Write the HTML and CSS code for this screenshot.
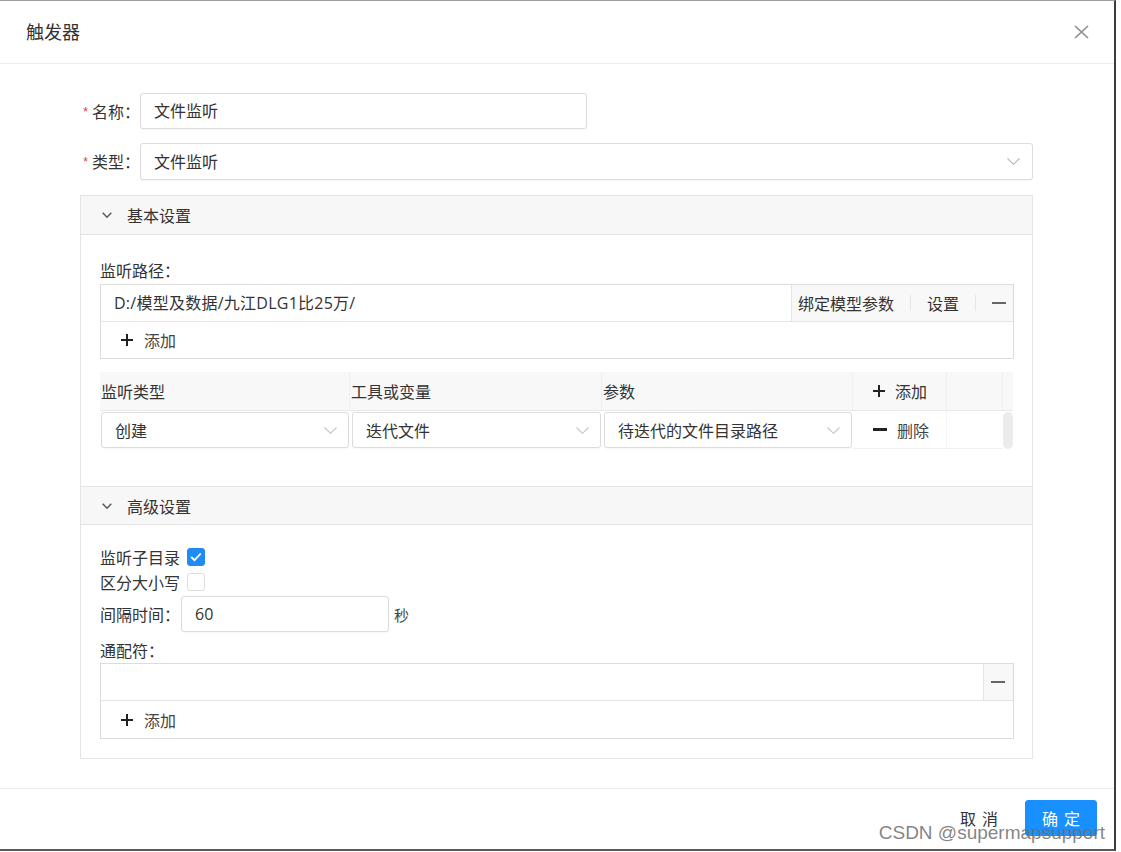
FILE: index.html
```html
<!DOCTYPE html>
<html lang="zh-CN">
<head>
<meta charset="utf-8">
<title>触发器</title>
<link rel="stylesheet" href="styles.css">
</head>
<body>
<div class="dialog">
  <div class="dlg-head">
    <span class="dlg-title">触发器</span>
    <svg class="close" width="15" height="14" viewBox="0 0 15 14"><path d="M1 1L14 13M14 1L1 13" stroke="#8c8c8c" stroke-width="1.6" fill="none"/></svg>
  </div>

  <div class="dlg-body">
    <div class="form-row">
      <label class="form-label"><span class="req">*</span>名称：</label>
      <div class="input name-input">文件监听</div>
    </div>
    <div class="form-row type-row">
      <label class="form-label"><span class="req">*</span>类型：</label>
      <div class="input select grow">
        <span>文件监听</span>
        <svg class="chev" width="13" height="7" viewBox="0 0 13 7"><path d="M0.5 0.5L6.5 6.3L12.5 0.5" stroke="#b8b8b8" stroke-width="1.1" fill="none"/></svg>
      </div>
    </div>

    <div class="panel">
      <div class="panel-head">
        <svg class="pchev" width="10" height="6" viewBox="0 0 10 6"><path d="M0.7 0.7L5 5.2L9.3 0.7" stroke="#555" stroke-width="1.4" fill="none"/></svg>
        <span>基本设置</span>
      </div>
      <div class="panel-content basic">
        <div class="field-label">监听路径：</div>
        <div class="list-box">
          <div class="list-row">
            <div class="list-input path-text">D:/模型及数据/九江DLG1比25万/</div>
            <div class="addon">
              <span>绑定模型参数</span>
              <i class="sep"></i>
              <span>设置</span>
              <i class="sep"></i>
              <i class="dash"></i>
            </div>
          </div>
          <div class="list-add">
            <svg class="plus" width="12" height="12" viewBox="0 0 12 12"><path d="M6 0V12M0 6H12" stroke="#222" stroke-width="2"/></svg>
            <span>添加</span>
          </div>
        </div>

        <div class="grid-table">
          <div class="th">监听类型</div>
          <div class="th">工具或变量</div>
          <div class="th">参数</div>
          <div class="th op">
            <svg class="plus" width="12" height="12" viewBox="0 0 12 12"><path d="M6 0V12M0 6H12" stroke="#222" stroke-width="2"/></svg>
            <span>添加</span>
          </div>
          <div class="th"></div>
          <div class="th last"></div>

          <div class="td first">
            <div class="input select cell-select"><span>创建</span><svg class="chev" width="13" height="7" viewBox="0 0 13 7"><path d="M0.5 0.5L6.5 6.3L12.5 0.5" stroke="#c4c4c4" stroke-width="1.1" fill="none"/></svg></div>
          </div>
          <div class="td">
            <div class="input select cell-select"><span>迭代文件</span><svg class="chev" width="13" height="7" viewBox="0 0 13 7"><path d="M0.5 0.5L6.5 6.3L12.5 0.5" stroke="#c4c4c4" stroke-width="1.1" fill="none"/></svg></div>
          </div>
          <div class="td">
            <div class="input select cell-select"><span>待迭代的文件目录路径</span><svg class="chev" width="13" height="7" viewBox="0 0 13 7"><path d="M0.5 0.5L6.5 6.3L12.5 0.5" stroke="#c4c4c4" stroke-width="1.1" fill="none"/></svg></div>
          </div>
          <div class="td op">
            <i class="minus"></i>
            <span>删除</span>
          </div>
          <div class="td opb"></div>
          <div class="td scroll"><i class="thumb"></i></div>
        </div>
      </div>

      <div class="panel-head second">
        <svg class="pchev" width="10" height="6" viewBox="0 0 10 6"><path d="M0.7 0.7L5 5.2L9.3 0.7" stroke="#555" stroke-width="1.4" fill="none"/></svg>
        <span>高级设置</span>
      </div>
      <div class="panel-content adv">
        <div class="check-row">
          <span>监听子目录</span>
          <span class="checkbox checked"><svg width="12" height="10" viewBox="0 0 12 10"><path d="M1.2 5L4.5 8.2L10.8 1.5" stroke="#fff" stroke-width="1.8" fill="none"/></svg></span>
        </div>
        <div class="check-row">
          <span>区分大小写</span>
          <span class="checkbox"></span>
        </div>
        <div class="interval-row">
          <span class="interval-label">间隔时间：</span>
          <div class="input interval-input">60</div>
          <span class="unit">秒</span>
        </div>
        <div class="field-label wild-label">通配符：</div>
        <div class="list-box wild-box">
          <div class="list-row">
            <div class="list-input"></div>
            <div class="addon small"><i class="dash"></i></div>
          </div>
          <div class="list-add">
            <svg class="plus" width="12" height="12" viewBox="0 0 12 12"><path d="M6 0V12M0 6H12" stroke="#222" stroke-width="2"/></svg>
            <span>添加</span>
          </div>
        </div>
      </div>
    </div>
  </div>

  <div class="dlg-foot">
    <button class="btn btn-text">取消</button>
    <button class="btn btn-primary">确定</button>
  </div>

  <div class="watermark">CSDN @supermapsupport</div>
</div>
</body>
</html>
```

FILE: styles.css
```css
* { box-sizing: border-box; }

html, body {
  margin: 0;
  padding: 0;
  background: #fff;
}

body {
  font-family: "Open Sans", "Noto Sans CJK SC", sans-serif;
  font-size: 16px;
  color: #333;
}

.dialog {
  position: relative;
  width: 1116px;
  height: 851px;
  border-top: 1px solid #9d9d9d;
  border-right: 2px solid #3c3c3c;
  border-bottom: 2px solid #5a5a5a;
  display: flex;
  flex-direction: column;
  background: #fff;
}

/* header */
.dlg-head {
  height: 63px;
  flex: 0 0 63px;
  border-bottom: 1px solid #ececec;
  display: flex;
  align-items: center;
  justify-content: space-between;
  padding: 0 25px 0 26px;
}
.dlg-title {
  font-size: 18px;
  line-height: 24px;
  color: #333;
  font-family: "Noto Sans CJK SC", sans-serif;
  margin-top: -2px;
}
.close { display: block; }

/* body */
.dlg-body {
  flex: 1;
  padding: 29px 81px 0 80px;
  display: flex;
  flex-direction: column;
}

.form-row {
  display: flex;
  align-items: center;
  height: 36px;
}
.type-row { margin-top: 14px; height: 37px; }
.type-row .input { height: 37px; }

.form-label {
  width: 60px;
  text-align: right;
  font-family: "Noto Sans CJK SC", sans-serif;
  line-height: 20px;
  color: #333;
  white-space: nowrap;
}
.req {
  color: #e0393e;
  font-size: 12px;
  margin-right: 4px;
  vertical-align: 2px;
  font-family: "Liberation Sans", sans-serif;
}

.input {
  height: 36px;
  border: 1px solid #dcdcdc;
  border-radius: 3px;
  display: flex;
  align-items: center;
  padding: 0 13px;
  line-height: 20px;
  color: #333;
  background: #fff;
  box-shadow: 0 1px 1px rgba(0,0,0,0.03);
}
.name-input { width: 447px; }
.grow { flex: 1; }
.select { justify-content: space-between; padding-right: 12px; }
.chev { display: block; flex: 0 0 auto; }

/* panel */
.panel {
  margin-top: 15px;
  border: 1px solid #e4e4e4;
}
.panel-head {
  height: 39px;
  background: #f7f7f7;
  border-bottom: 1px solid #e4e4e4;
  display: flex;
  align-items: center;
  padding-left: 21px;
  font-family: "Noto Sans CJK SC", sans-serif;
  line-height: 20px;
}
.panel-head.second {
  height: 39px;
  border-top: 1px solid #e4e4e4;
}
.pchev { display: block; margin-right: 15px; }

.panel-content.basic { padding: 24px 18px 37px 19px; }
.panel-content.adv { padding: 19px 18px 19px 19px; }

.field-label {
  line-height: 22px;
  height: 22px;
  font-family: "Noto Sans CJK SC", sans-serif;
  color: #333;
}

.list-box {
  margin-top: 3px;
  border: 1px solid #dcdcdc;
}
.list-row {
  height: 37px;
  border-bottom: 1px solid #e6e6e6;
  display: flex;
}
.list-input {
  flex: 1;
  display: flex;
  align-items: center;
  padding-left: 13px;
  line-height: 20px;
  color: #333;
}
.path-text { letter-spacing: 0.25px; }
.addon {
  width: 222px;
  background: #f8f8f8;
  border-left: 1px solid #e4e4e4;
  display: flex;
  align-items: center;
  gap: 16px;
  padding-left: 6px;
  font-family: "Noto Sans CJK SC", sans-serif;
  line-height: 20px;
  color: #333;
}
.addon.small {
  width: 30px;
  padding-left: 7px;
}
.sep {
  display: block;
  width: 1px;
  height: 16px;
  background: #e6e6e6;
}
.dash {
  display: block;
  width: 14px;
  height: 2px;
  background: #666;
}
.list-add {
  height: 36px;
  display: flex;
  align-items: center;
  padding-left: 20px;
  gap: 11px;
  font-family: "Noto Sans CJK SC", sans-serif;
  line-height: 20px;
  color: #444;
}
.wild-box .list-add { height: 37px; }
.plus { display: block; }

/* grid table */
.grid-table {
  margin-top: 13px;
  display: grid;
  grid-template-columns: 250px 252px 251px 94px 56px 10px;
  grid-template-rows: 39px 38px;
}
.th {
  background: #f8f8f8;
  border-bottom: 1px solid #e9e9e9;
  border-right: 1px solid #f0f0f0;
  display: flex;
  align-items: center;
  padding-left: 1px;
  font-family: "Noto Sans CJK SC", sans-serif;
  line-height: 20px;
  color: #333;
}
.th.last { border-right: none; }
.th.op, .td.op {
  padding-left: 20px;
  gap: 10px;
}
.td {
  padding: 1px 1px 1px 2px;
  display: flex;
  align-items: center;
}
.td.first { padding-left: 1px; }
.td.op {
  border-right: 1px solid #f4f4f4;
  border-bottom: 1px solid #f0f0f0;
  font-family: "Noto Sans CJK SC", sans-serif;
  line-height: 20px;
  color: #444;
}
.td.opb { border-bottom: 1px solid #f0f0f0; }
.cell-select {
  width: 100%;
  padding-left: 13px;
  padding-right: 11px;
  font-family: "Noto Sans CJK SC", sans-serif;
}
.minus {
  display: block;
  width: 14px;
  height: 3px;
  background: #222;
}
.td.scroll { padding: 1px 0 0 0; align-items: stretch; }
.thumb {
  display: block;
  width: 10px;
  height: 37px;
  border-radius: 5px;
  background: #ececec;
}

/* advanced */
.check-row {
  height: 25px;
  display: flex;
  align-items: center;
  font-family: "Noto Sans CJK SC", sans-serif;
  line-height: 20px;
  color: #333;
}
.checkbox {
  width: 18px;
  height: 18px;
  margin-left: 7px;
  border: 1px solid #dedede;
  border-radius: 3px;
  background: #fff;
  display: flex;
  align-items: center;
  justify-content: center;
}
.checkbox.checked {
  background: #1e8cf2;
  border-color: #1e8cf2;
}
.checkbox svg { display: block; }

.interval-row {
  margin-top: 2px;
  display: flex;
  align-items: center;
  height: 36px;
}
.interval-label {
  width: 81px;
  font-family: "Noto Sans CJK SC", sans-serif;
  line-height: 20px;
  color: #333;
  white-space: nowrap;
}
.interval-input { width: 208px; }
.unit {
  margin-left: 5px;
  font-family: "Noto Sans CJK SC", sans-serif;
  font-size: 15px;
  color: #444;
}
.wild-label { margin-top: 7px; }
.wild-box { margin-top: 2px; }

/* footer */
.dlg-foot {
  flex: 0 0 61px;
  height: 61px;
  border-top: 1px solid #ececec;
  display: flex;
  justify-content: flex-end;
  align-items: flex-start;
  gap: 10px;
  padding: 11px 17px 0 0;
}
.btn {
  height: 36px;
  width: 72px;
  border-radius: 3px;
  font-family: "Noto Sans CJK SC", sans-serif;
  font-size: 16px;
  line-height: 20px;
  padding: 0 0 0 6px;
  letter-spacing: 6px;
  cursor: pointer;
}
.btn-text {
  background: transparent;
  border: none;
  color: #333;
}
.btn-primary {
  background: #1890ff;
  border: 1px solid #1890ff;
  color: #fff;
}

.watermark {
  position: absolute;
  right: 9px;
  bottom: 4px;
  font-family: "Liberation Sans", Arial, sans-serif;
  font-size: 19px;
  line-height: 24px;
  color: rgba(110, 110, 110, 0.85);
  white-space: nowrap;
  pointer-events: none;
}
```
